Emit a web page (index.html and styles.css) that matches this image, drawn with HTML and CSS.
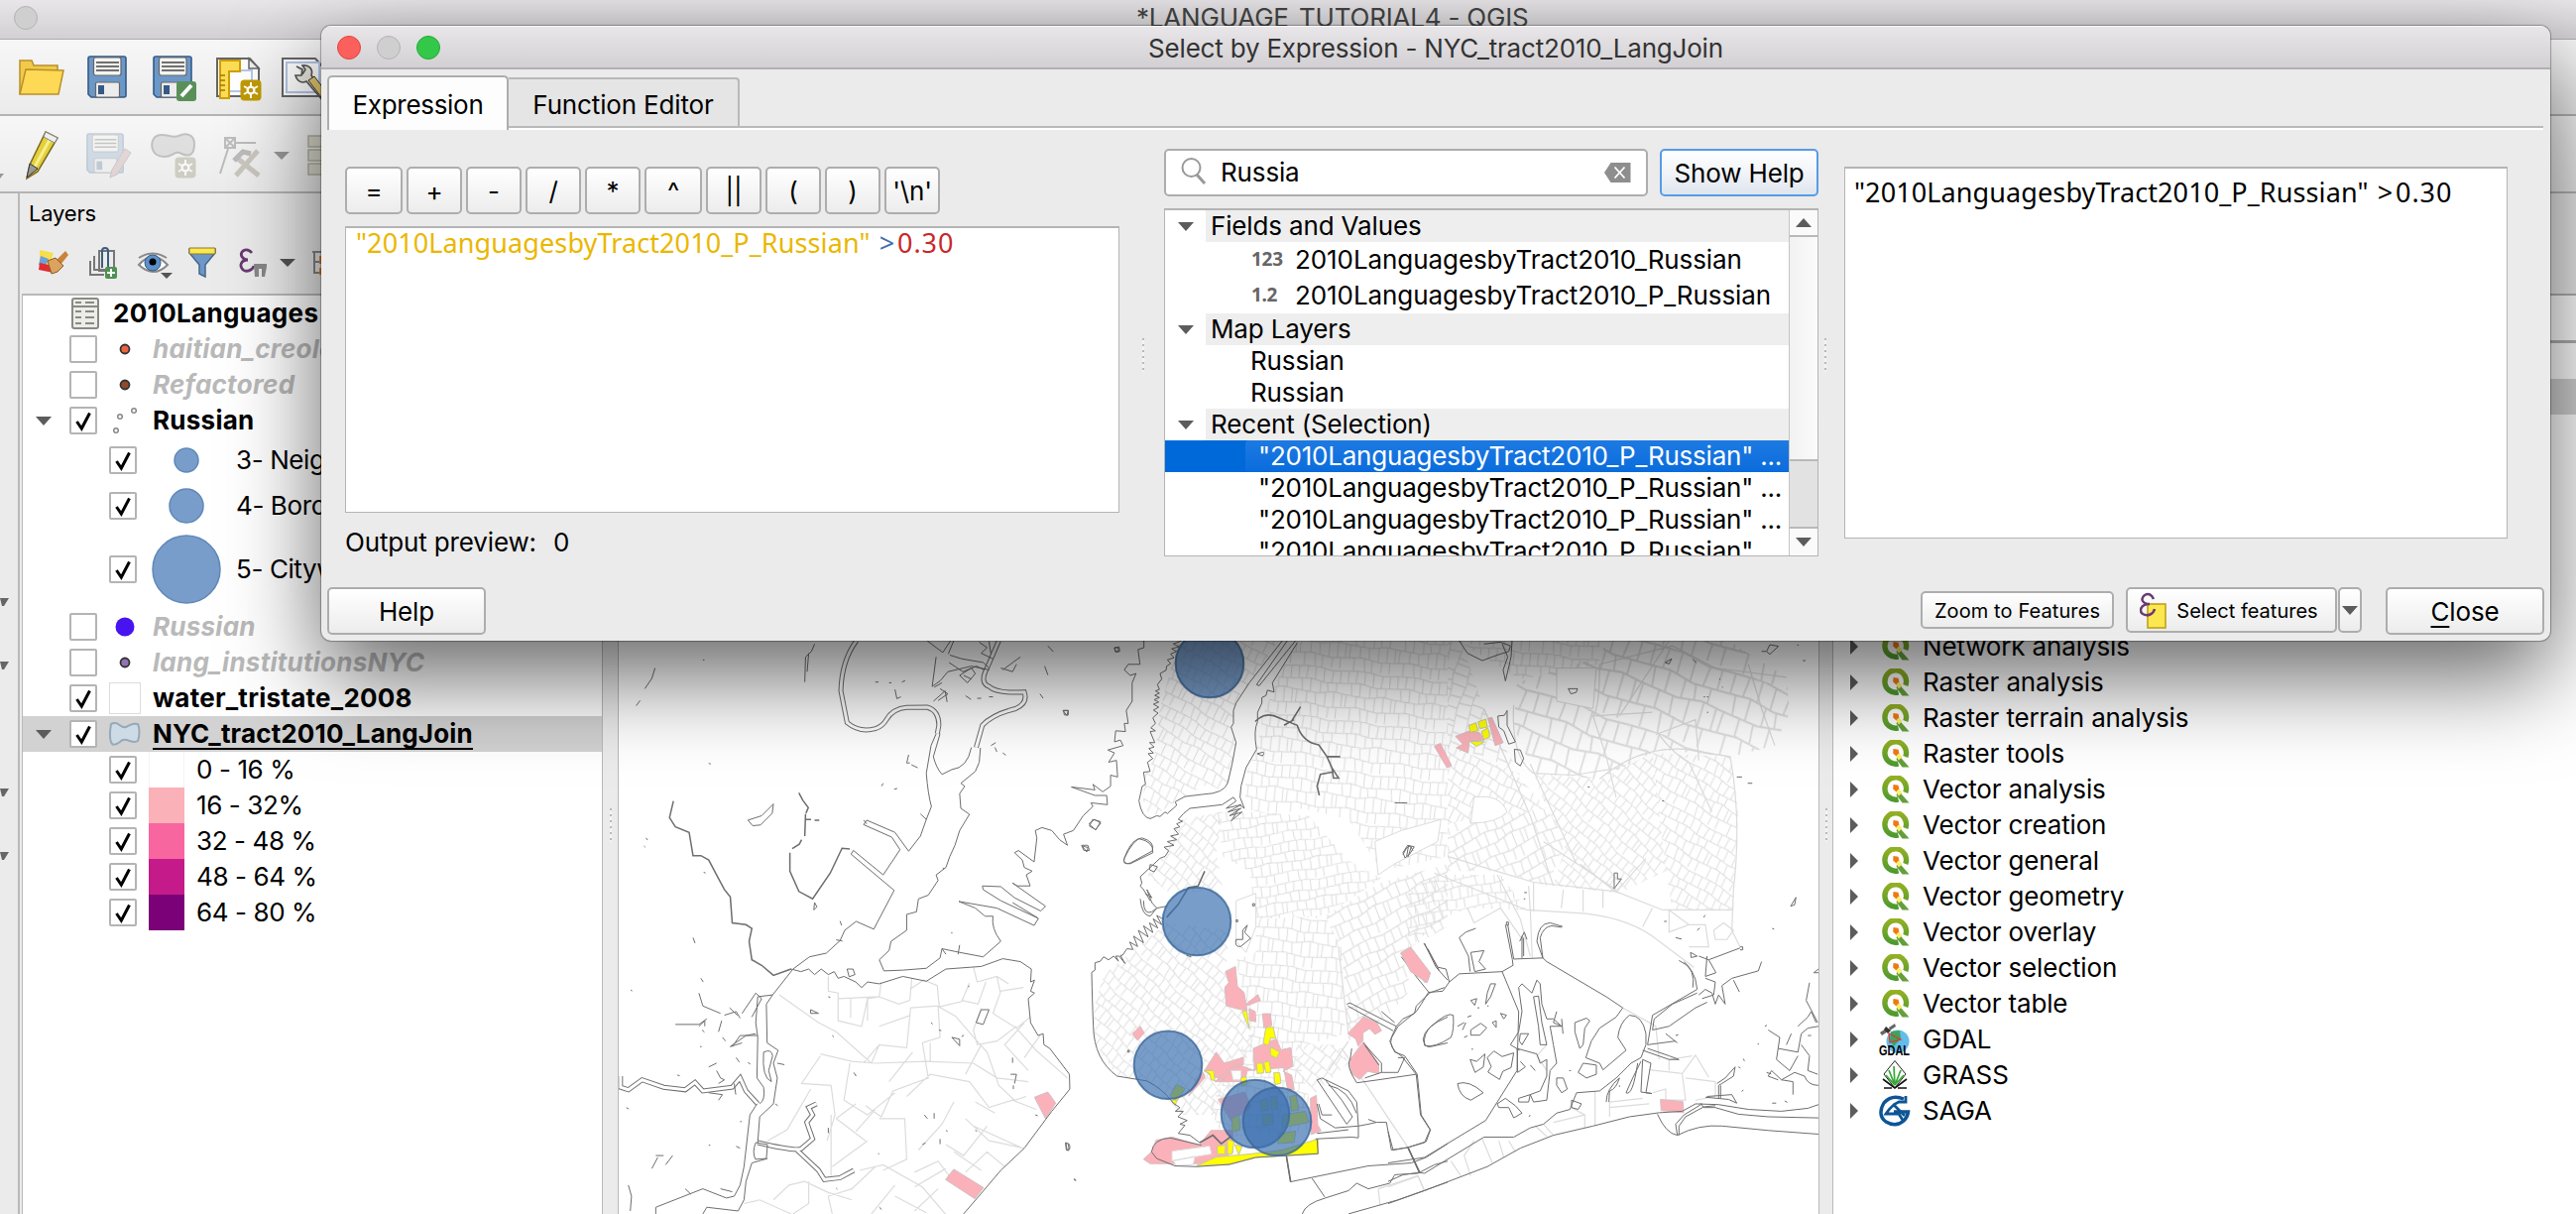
FILE: index.html
```html
<!DOCTYPE html>
<html lang="en">
<head>
<meta charset="utf-8">
<title>QGIS</title>
<link rel="stylesheet" href="styles.css">
</head>
<body>
<svg class="defs" width="0" height="0">
  <defs>
    <symbol id="check" viewBox="0 0 28 28"><rect x="1" y="1" width="26" height="26" rx="1" fill="#fff" stroke="#b4b4b4" stroke-width="2"/><path d="M7.5 15l4.8 7L20.5 6.500" fill="none" stroke="#000" stroke-width="3"/></symbol>
    <symbol id="uncheck" viewBox="0 0 28 28"><rect x="1" y="1" width="26" height="26" rx="1" fill="#fff" stroke="#b4b4b4" stroke-width="2"/></symbol>
    <linearGradient id="qg" x1="0" y1="0" x2="0" y2="1"><stop offset="0" stop-color="#93b023"/><stop offset="1" stop-color="#4f9a2e"/></linearGradient>
    <symbol id="qgis" viewBox="0 0 28 28"><path d="M17 23.800A10.800 11.200 0 1 1 24.300 17" fill="none" stroke="url(#qg)" stroke-width="5.400"/><path d="M17 15l11 12.500h-7L15 19.500z" fill="#64a03a"/><path d="M12 9l5 .8 1 4.200-3 2.600-3.300-3z" fill="#ee7913"/><path d="M14.500 16.500l3-3 3.500 3.500-3.500 3.500z" fill="#fcf06a"/></symbol>
    <symbol id="floppy" viewBox="0 0 40 43"><path d="M3 1h34a2 2 0 0 1 2 2v37a2 2 0 0 1-2 2H4l-3-3V3a2 2 0 0 1 2-2z" fill="#6c98c8" stroke="#355a86" stroke-width="1.600"/><rect x="6.500" y="2" width="27.500" height="18" rx="2" fill="#f4f4f2" stroke="#666" stroke-width="1.200"/><path d="M9 7h23M9 11h23M9 15h23" stroke="#444" stroke-width="1.500"/><rect x="8.500" y="27" width="24" height="15" rx="1.500" fill="#ececec" stroke="#666" stroke-width="1.200"/><rect x="11" y="30" width="6" height="9" fill="#355a86"/></symbol>
    <symbol id="gear" viewBox="0 0 22 22"><rect x=".5" y=".5" width="21" height="21" rx="4" fill="currentColor"/><path d="M11 3v16M4 7l14 8M4 15l14-8" stroke="#fff" stroke-width="2"/><circle cx="11" cy="11" r="4.500" fill="#fff"/><circle cx="11" cy="11" r="2.200" fill="currentColor"/></symbol>
    <pattern id="mesh" width="150" height="136" patternUnits="userSpaceOnUse" patternTransform="rotate(6)"><path class="tract" d="M0 4L60 0 110 8 150 4M0 38L45 34 90 42 150 38M0 68L70 72 115 64 150 68M0 104L40 100 98 108 150 104M8 4v34M34 2l-3 33M58 0v36M84 4v37M112 8l-4 33M134 6v33M18 36l4 33M46 34v36M76 39v33M96 42l4 26M124 39v26M6 68l-2 36M36 70v30M62 71l3 33M92 68v39M118 64v42M142 67v37M20 102v36M50 101l4 36M74 104v36M104 108l-2 34M128 106v34"/></pattern>
    <pattern id="mesh-a" href="#mesh" patternTransform="rotate(28) scale(.95)"/>
    <pattern id="mesh-b" href="#mesh" patternTransform="rotate(40) scale(.9)"/>
    <pattern id="mesh-c" href="#mesh" patternTransform="rotate(-24) scale(1.050)"/>
    <pattern id="mesh-d" href="#mesh" patternTransform="rotate(-72) scale(1.100)"/>
    <pattern id="mesh-e" href="#mesh" patternTransform="rotate(18) scale(1.700)"/>
    <pattern id="mesh-f" href="#mesh" patternTransform="rotate(-8) scale(1,.8)"/>
  </defs>
</svg>

<div class="app">
  <header class="titlebar"><i class="light"></i><span class="main-title">*LANGUAGE_TUTORIAL4 - QGIS</span></header>
  <div class="toolbar">
    <svg width="340" height="75" viewBox="0 40 340 75">
      <path d="M20 95V61h12l2 5h24v7" fill="#f2c94a" stroke="#b8902a" stroke-width="1.500"/><path d="M20 95l6-25 38 1-5 24z" fill="#fdd955" stroke="#b8902a" stroke-width="1.500"/>
      <use href="#floppy" x="88" y="56" width="40" height="43"/>
      <use href="#floppy" x="154" y="56" width="40" height="43"/>
      <rect x="178" y="82" width="20" height="20" rx="3" fill="#5a9058"/><path d="M183 97l10-11" stroke="#fff" stroke-width="4"/>
      <path d="M219 59h33l9 10v28h-42z" fill="#fff" stroke="#666" stroke-width="2"/><path d="M231 71h23v21h-23z" fill="none" stroke="#b5c8ec" stroke-width="2"/><path d="M251 59v10h10z" fill="#eee" stroke="#666" stroke-width="1.500"/><path d="M222 61h20v11h-11v27h-9z" fill="#fddc57" stroke="#cf9f00" stroke-width="2"/><path d="M222 76h5M222 81h5M222 86h5M222 91h5" stroke="#a07a00" stroke-width="1.500"/>
      <use href="#gear" x="242" y="80" width="22" height="22" color="#c09a00"/>
      <path d="M285 59h33l9 10v28h-42z" fill="#fff" stroke="#666" stroke-width="2"/><path d="M289 63h33v30h-33z" fill="none" stroke="#b5c8ec" stroke-width="2"/><path d="M299 67l6 3-1 6-6 0c2 7 7 8 11 6l17 20 5-4-17-22c2-6-2-11-9-10l3 4-3 5" fill="#e8e8e0" stroke="#555" stroke-width="1.600"/><path d="M311 81l13 17 6-4-13-17z" fill="#e2c76c" stroke="#333"/>
    </svg>
  </div>
  <div class="toolbar second">
    <svg width="340" height="76" viewBox="0 117 340 76">
      <path d="M0 175h4l-4 5z" fill="#999"/>
      <path d="M46 133l12 6-20 34-11 7 3-14z" fill="#e4d03c" stroke="#7b6a1f" stroke-width="1.500"/><path d="M50 141L34 170" stroke="#f7ee8d" stroke-width="3"/><path d="M46 133l12 6-3 5-11-6z" fill="#eee" stroke="#888"/><path d="M30 165l8 5-11 9z" fill="#999" stroke="#333"/>
      <g opacity=".25"><use href="#floppy" x="86" y="134" width="40" height="41" color="#888"/><path d="M126 150l6 4-14 22-7 3 2-8z" fill="#b88" stroke="#655"/></g>
      <g opacity=".55"><path d="M158 137c8-4 14 3 22 0 8-4 16-1 16 8 0 10-4 14-13 10-6-4-9 3-17 3-16 0-15-18-8-21z" fill="#cfcfcf" stroke="#999" stroke-width="2"/><use href="#gear" x="176" y="158" width="22" height="22" color="#b3b3a0"/></g>
      <g opacity=".5" fill="none" stroke="#888" stroke-width="2"><path d="M227 139h10v10h-10zM227 139l10 10M237 139l-10 10M238 144h20M230 150l-8 25"/><path d="M238 177l22-25M240 160l21 17" stroke="#a5a08f" stroke-width="5"/><path d="M236 162l9-9 8 2" stroke-width="5"/></g>
      <path d="M276 153h16l-8 8z" fill="#999"/>
      <g fill="#deddd0" stroke="#b5b3a4" stroke-width="1.500"><path d="M311 137h20v11h-20zM311 151h20v11h-20zM311 165h20v11h-20z"/></g>
    </svg>
  </div>
  <main class="workspace">
    <aside class="strip"><svg width="20" height="1029" viewBox="0 195 20 1029"><path d="M0 603h9l-5 8H2zM0 667h9l-5 8H2zM0 795h9l-5 8H2zM0 859h9l-5 8H2z" fill="#666"/></svg></aside>
    <section class="layers">
      <h2 class="dock-title">Layers</h2>
      <div class="dock-tools">
        <svg width="310" height="60" viewBox="20 236 310 60">
          <path d="M40 252l14 3-5 14-9-4z" fill="#f7df4c"/><path d="M41 258l8 3-4 9-6-3z" fill="#6da0dc"/><path d="M40 265l9 2 5 8-15-3z" fill="#e02c33"/><path d="M66 253l3 4-8 10-5-4z" fill="#c9843a"/><path d="M48 263l8-3 8 8-6 6-6 2z" fill="#dca35f" stroke="#8c5a26"/>
          <g fill="none" stroke="#777" stroke-width="2"><path d="M91 263v14h14M95 258v14h14M100 253h15v20h-15z"/></g><path d="M103 270v-17a3 3 0 0 1 6 0v16" fill="none" stroke="#3c5d80" stroke-width="2"/><rect x="106" y="269" width="12" height="12" rx="2" fill="#4f9153"/><path d="M112 271v8M108 275h8" stroke="#fff" stroke-width="2"/>
          <path d="M140 267q14-16 29 0-14 14-29 0z" fill="#fff" stroke="#888" stroke-width="2"/><path d="M140 260q14-9 28 0" fill="none" stroke="#888" stroke-width="2"/><circle cx="154" cy="265" r="8" fill="#5d90c9" stroke="#355a86"/><circle cx="154" cy="264" r="3.500" fill="#000"/><path d="M162 275h12l-6 6z" fill="#555"/>
          <path d="M191 251h26v4l-10 12v12l-6-3v-9l-10-12z" fill="#6c98c8" stroke="#46658c" stroke-width="1.500"/><path d="M191 250h26v6h-26z" fill="#fbe74f" stroke="#8a7a2c"/>
          <path d="M254 255q-4-5-9-2c-4 4 0 9 5 9-7 0-9 6-5 10 4 3 10 0 11-4" fill="none" stroke="#6a3a72" stroke-width="2.800"/><path d="M256 266h13v3l-2 10h-3v-8h-3v8h-4z" fill="#888"/>
          <path d="M282 261h16l-8 8z" fill="#555"/><path d="M315 254h9M317 254v21h7M317 264h7" fill="none" stroke="#888" stroke-width="2"/><path d="M322 258h6v8h-6zM322 270h6v7h-6z" fill="#e88c2c"/>
        </svg>
      </div>
      <div class="tree">
        <div class="row"><span class="gap"></span><span class="ic0"><svg width="28" height="32"><rect x="1" y="1" width="26" height="30" rx="2" fill="#ecece8" stroke="#8a8a84" stroke-width="2"/><path d="M1 9h26" stroke="#8a8a84" stroke-width="2"/><path d="M4 5h6M14 5h9M4 14h6M14 14h9M4 20h6M14 20h9M4 26h6M14 26h9" stroke="#8a8a84" stroke-width="2"/></svg></span><b>2010Languages</b></div>
        <div class="row off"><span class="gap"></span><svg class="cb"><use href="#uncheck"/></svg><span class="ic"><svg width="12" height="12"><circle cx="6" cy="6" r="4.500" fill="#e8663f" stroke="#333" stroke-width="1.800"/></svg></span><b>haitian_creole</b></div>
        <div class="row off"><span class="gap"></span><svg class="cb"><use href="#uncheck"/></svg><span class="ic"><svg width="12" height="12"><circle cx="6" cy="6" r="4.500" fill="#8f4a2b" stroke="#333" stroke-width="1.800"/></svg></span><b>Refactored</b></div>
        <div class="row"><span class="gap"><i class="down"></i></span><svg class="cb"><use href="#check"/></svg><span class="ic"><svg width="32" height="32" fill="none" stroke="#888" stroke-width="1.500"><circle cx="7" cy="26" r="2.300"/><circle cx="11" cy="12" r="2.300"/><circle cx="25" cy="6" r="2.300"/></svg></span><b>Russian</b></div>
        <div class="row sub h44"><svg class="cb"><use href="#check"/></svg><span class="sym"><svg width="26" height="26"><circle cx="13" cy="13" r="12" fill="#799dca" stroke="#5f88b8" stroke-width="1.500"/></svg></span>3- Neighborhood</div>
        <div class="row sub h48"><svg class="cb"><use href="#check"/></svg><span class="sym"><svg width="36" height="36"><circle cx="18" cy="18" r="17" fill="#799dca" stroke="#5f88b8" stroke-width="1.500"/></svg></span>4- Borough</div>
        <div class="row sub h80"><svg class="cb"><use href="#check"/></svg><span class="sym"><svg width="70" height="70"><circle cx="35" cy="35" r="34" fill="#799dca" stroke="#5f88b8" stroke-width="1.500"/></svg></span>5- Citywide</div>
        <div class="row off"><span class="gap"></span><svg class="cb"><use href="#uncheck"/></svg><span class="ic"><svg width="20" height="20"><circle cx="10" cy="10" r="9.500" fill="#4713f0"/></svg></span><b>Russian</b></div>
        <div class="row off"><span class="gap"></span><svg class="cb"><use href="#uncheck"/></svg><span class="ic"><svg width="12" height="12"><circle cx="6" cy="6" r="4.500" fill="#9273b5" stroke="#333" stroke-width="1.800"/></svg></span><b>lang_institutionsNYC</b></div>
        <div class="row"><span class="gap"></span><svg class="cb"><use href="#check"/></svg><span class="ic"><i class="blank"></i></span><b>water_tristate_2008</b></div>
        <div class="row current"><span class="gap"><i class="down"></i></span><svg class="cb"><use href="#check"/></svg><span class="ic"><svg width="32" height="24"><path d="M2 2c8-4 9 5 15 3 6-3 8-4 12-3 2 4 2 12 0 17-6 4-12-5-18 1-4 3-8 4-9 0-2-5-1-12 0-18z" fill="#cddbe6" stroke="#95a9b8" stroke-width="2"/></svg></span><b class="active">NYC_tract2010_LangJoin</b></div>
        <div class="row sub"><svg class="cb"><use href="#check"/></svg><i class="swatch s0"></i>0 - 16 %</div>
        <div class="row sub"><svg class="cb"><use href="#check"/></svg><i class="swatch s1"></i>16 - 32%</div>
        <div class="row sub"><svg class="cb"><use href="#check"/></svg><i class="swatch s2"></i>32 - 48 %</div>
        <div class="row sub"><svg class="cb"><use href="#check"/></svg><i class="swatch s3"></i>48 - 64 %</div>
        <div class="row sub"><svg class="cb"><use href="#check"/></svg><i class="swatch s4"></i>64 - 80 %</div>
      </div>
    </section>
    <div class="splitter"><i class="dots"></i></div>
    <svg class="map" width="1210" height="1029" viewBox="624 195 1210 1029">
      <!-- New Jersey and Staten Island -->
      <g transform="translate(610 640) scale(.3954 .3724)">
        <path class="tr" d="M445 975L545 1050 590 1075 680 1160 700 1110 770 1118 780 1010M570 925v40l25 5v75l60 15 15-75 30-5 5-40M595 985l105-5M627 985v52M670 980v65M700 980l50 20 28-10 5-60M778 960l35-25 35 15 5 58 42 25 50 62 30 35 30 90 40 40 30-10M780 1010l70-5 5 85-45 15 15 95-90 35-30 70-40-30M850 1008l60-15 20-50M940 900l10 40 50-15 30 20M912 990l40 10 20-60M1000 925l8 40 60-10M1010 965l-20 60 60 40 35-30M1050 1060l-50 40-50 10-10-40 20-60M1050 1065l50 60 80 75M1070 1050l-50 60 60 70M1110 1085l-40 60M550 1135l80 20 60 5 130-5 120 5 60 40 80 10M550 1140L502 1215l75 5 10 80-20 70M625 1160l-15 100 60 40 70-60M660 1160l40-50M590 1310l75 60M640 1270l-50 40M690 1285l-50 60M670 1370l-90 70M700 1310l65 0 5 110-60 30M770 1250l60-60 100 20 50 70 60-20 60 25M800 1395l60-70 30-60M870 1380l45 30 60-80M920 1310l60 60 90 20M945 1265l50 30M940 1330l125 60M890 1400l70 50M975 1400l45 40M975 1400l-55 55M650 1450l60-15 100 60 60 75M690 1440l-60 60-60 20 10 48M430 1530l40-40 40-10 60 30 60 20M520 1480v60l-40 28M790 1455l60-30 50 70M740 1490l-60 78M790 1495l80-50M577 1300v165M415 1370l50-30 60-110M725 1210l60-80M780 1030l-80 30M830 1155v-50M960 1110l-40 80M355 1540l40-10 80 38M740 1520l80 45M850 1500l-60 60"/>
        <path class="pink" d="M1096 1252l34-14 20 30-26 42zM890 1447l76 50-22 30-75-52z"/>
        <path class="riv" d="M642 16Q604 70 602 152L618 238Q650 266 690 254 708 248 718 230 735 200 770 197L822 196Q852 205 852 245L848 268M1005 16L975 90Q955 130 980 140 1000 160 1070 155 1080 185 1048 200 990 215 963 245L947 305M390 1375Q480 1398 500 1392L530 1365 515 1320 530 1300 520 1280 540 1270M490 1395L545 1450 560 1475 600 1470 635 1450M40 1195V1225L60 1232 95 1205 150 1225 205 1232 230 1212 250 1235 325 1225 345 1200 360 1235 390 1270"/>
        <path class="riv in" d="M642 16Q604 70 602 152L618 238Q650 266 690 254 708 248 718 230 735 200 770 197L822 196Q852 205 852 245L848 268M1005 16L975 90Q955 130 980 140 1000 160 1070 155 1080 185 1048 200 990 215 963 245L947 305M390 1375Q480 1398 500 1392L530 1365 515 1320 530 1300 520 1280 540 1270M490 1395L545 1450 560 1475 600 1470 635 1450M40 1195V1225L60 1232 95 1205 150 1225 205 1232 230 1212 250 1235 325 1225 345 1200 360 1235 390 1270"/>
        <path class="co" d="M845 268L832 300 820 375Q824 430 833 465L820 500 805 485M820 500L805 545 775 586 740 535 668 502 660 514 732 548 753 582 710 650 634 584 628 594 738 692 686 797 641 776 612 800 600 828 565 862 522 872 480 905 428 975 390 980M855 268L838 330Q845 360 860 378L885 365Q925 360 935 305M958 306L955 345 945 370 908 402 918 410 905 430 908 470 930 486 905 530 893 570 880 600 870 630 845 650 850 665 825 705 800 715 795 750 770 757 770 800 730 830 725 855 700 880 712 910 760 908 820 903 855 875 860 850 905 860 965 872 1010 830Q985 795 990 762L970 762 945 740 903 722 1000 740 1095 787 1106 768 1010 720 965 690 963 680 1010 682 1045 712 1112 748 1124 735 1040 672 1052 680 1085 680 1075 650 1090 640 1070 630 1065 610 1045 590 1055 584 1095 615 1102 550 1098 530 1115 522 1140 530 1160 555 1180 570 1170 540 1195 530 1220 490 1245 465 1240 455 1282 460 1280 435 1250 435 1190 412 1250 420 1245 405 1270 425 1290 410 1290 380 1308 385 1305 340 1285 345 1300 320 1283 312 1322 300 1315 285 1300 290 1303 260 1328 262 1325 240 1335 240 1330 205 1345 180 1345 130 1355 105 1340 110 1325 95 1335 80 1365 80 1360 40 1375 35V16M475 905L500 912 520 905 535 920 552 905 570 920 585 912 595 930 610 925 640 940 655 955 670 940 700 945 760 925 820 938 870 905 960 898 1015 877 1060 885 1088 905 1086 940 1096 935 1086 965 1096 970 1080 985 1086 1050 1105 1085 1118 1080 1120 1110 1135 1120 1185 1190 1186 1230 1140 1290 1070 1390 1010 1450 950 1525 915 1568M390 980L385 1050 390 1090 388 1200 405 1225Q410 1260 395 1270M428 975L412 1000 414 1105 442 1125 430 1160 440 1200 430 1270 395 1305 390 1375M388 1270L370 1300 355 1440 345 1490 330 1520 310 1525 250 1500 130 1550V1568M385 1375Q375 1400 384 1420L412 1418 415 1380ZM415 1418L375 1430 360 1480 355 1530 340 1560 260 1550 250 1568M405 1130Q425 1120 428 1140L418 1180 425 1210 Q400 1200 405 1130M1325 605Q1340 560 1362 552 1400 560 1398 590L1340 620Q1320 620 1325 605M960 1015l20 0-15 40-18-5z"/>
        <path class="co wide" d="M175 450L165 495 180 520 215 535 225 598 245 598 265 610 285 650 305 690 320 710 325 780 360 785 375 795 368 830 375 880 400 895 430 922 475 905M512 485L510 545M472 590L472 640 495 695 530 715 575 645 605 578 625 580M495 428l10 20 14 20-6 15M512 500h14M535 502h12M502 555l-6 12-18 12"/>
        <path class="co" d="M128 90l-8 28-18 28M90 178l-10 14M535 25l-8 20-15 15-2 68M520 50l-4 50M822 16l40 32 20-32M890 16l-14 36M845 60l-10 80 20-15 20-25 60-15 45 10M880 55l30 10 55 10 15 15M878 75l35 25 35-15 20 10M905 110l20 20 20-25-10-15zM915 110l20 10M838 180l30-28 5 30M850 178l25-18-20-14M860 130l-20 12M955 20l20 15-15 15 30 15M980 18l5 35M1010 90l30 10 10-20M1015 95l45-35M1130 30l14 16M1122 85l8 24M1110 160l8 12M920 165l14 10M950 172h10M980 168h10M690 128h8M725 130h6M758 128l8-4M740 148l5 25 10-5M985 300l12-8M995 305l5 12M1015 320l8 6M775 325l-5 22 8 0M782 352l16 8M710 402l-4 8M738 418l8-2M105 550l4 6M100 572l3 3M365 502l35-12 30-32-3 25-30 32-20 2zM660 502l8 10M225 820l5 15M535 725l-2 20 8-8zM600 775l4 12M590 826l16 3M885 805v4M905 840l-4 25M860 850l10 15M1040 725l65 42M1300 35h10v10h-8zM1170 205l12 0 0 12-10 0zM1235 512l14-12 16 10-14 18zM1216 570l16 0 4 14-14 0zM525 1015l20 10-20 0zM618 905l15 0 5 15-15 6zM240 970l10 35 45 20M180 1055l60 0 20-15M240 1060l15-15 0 15M290 1075l8-30M305 1030l30-10 10 18M318 1010l20 20M350 1025l35-55 15 15-25 50M385 1080l-25 5-40 30 30-10M300 1090l8 10M390 1085l-45 0-20 30M335 1145l8 12M365 1158l6 4M265 1170l20-10M285 1180l10 20 10 5-15 10M265 1240l35 5-10 15M330 1215l4 30M55 1280l6 4M245 930l6 10M248 1070l6 6M345 1390l-10-5M205 1500l15 15M295 1500l30 8M120 1445l15-30M130 1410h20M155 1435l18-25M60 1490l8 30-3 40M580 1085l4 4M635 1185l6 10M570 1335v14M815 1300l8 10M840 1295v15M810 1380l8-4M855 1365v14M870 1342l4 2M945 1342l4 2M1175 1375q10 0 8 20l-6 0zM1098 1300l6 2M590 1498l3 3M700 1550l6 6M697 1405h3M885 1090l20 5 0 18zM910 1088l6-4M832 1050l4 4M852 1070l6 2M928 950v4M570 980l5 2M1040 1145v14M1035 1190l15 0-5 25M1042 1220v10M440 1160l18 4M435 1270l6 5M345 1318h4M265 1382h4M250 68h4M265 348l5 2M252 643l5 2M66 962l4 2M185 1192l6 2M243 1115h4M862 632h4M1196 1475l4 3"/>
      </g>
      <!-- Manhattan and Brooklyn -->
      <g transform="translate(1060 640) scale(.3333 .3724)">
        <path fill="url(#mesh-a)" d="M385 16L330 200 312 330 285 380 278 450 300 496 400 440 470 405 530 425 560 300 545 250 560 180 690 16Z"/>
        <path fill="url(#mesh)" d="M700 90L640 220 622 310 590 380 585 470 680 490 760 470 900 500 1000 640 1200 600V16H745Z"/>
        <path fill="url(#mesh-b)" d="M390 500L330 610 290 650 360 700 520 690 500 590 520 480Z"/>
        <path fill="url(#mesh-f)" d="M500 480L620 480 780 490 900 610 1000 660 830 760 620 770 600 640 520 600Z"/>
        <path fill="url(#mesh-b)" d="M350 780L160 920 130 1010 130 1100 200 1195 290 1208 400 1300 500 1300 620 1100 530 900 540 800Z"/>
        <path fill="url(#mesh)" d="M620 770L830 760 880 850 890 1080 740 1120 780 1250 800 1340 520 1360 480 1280 600 1080 560 880 620 860Z"/>
        <path fill="url(#mesh-c)" d="M830 760L1000 670 1200 620V790L1060 860 1090 960 1020 1030 900 1100 880 870Z"/>
        <path fill="url(#mesh-b)" d="M740 1110L870 1110 900 1160 800 1240 740 1180Z"/>
        <path class="tr" d="M880 1120L1080 1388M990 1500L1110 1465 1130 1505M990 1500l6 45M900 1100l-60 80M870 850l30 230"/>
        <path class="park" d="M560 720l60-20 0 90-30 70-30-30zM980 560l80-30 120-30-10 60-130 60-50 30z"/>
        <path class="pink" d="M528 912l30-14 6 54 20 16 10 50-34-6-30-8-4-50 12-12zM590 1000l36-26 8 16-40 14zM600 1012l18 8 2 28-20-4zM640 1026l24 0 4 32-24 6zM1058 862l30-16 58 70-14 26-40-40zM246 1080l24-20 12 18-20 20zM898 1080l48-46 40 16 14 22-20 10-16-16-20 12 0 20-14 16-8-20zM930 1120l16-18 46 60 0 26-34-6-24 22-24-16-8-34zM464 1180l36-50 24 30 58-16v20l-30 6-30 34-36-8zM612 1120l70-26 14 30 30-6 6 50-30 14 26 10 8 40-20 0-12-60-110 8-8 30-90 0 60-50 60 20zM440 1205l20-20 6 14-50 50zM785 1255l18-8 4 80 10 16-30 10zM506 1258l80-20 20 40-60 40zM304 1400l14-32 50-8 80 22 36-40 66 0 0 60-70 30-180 0-20-12z"/>
        <path class="hole" d="M366 1398l114-14 6 22-120 18zM370 1424l66-12-6 22-52 4zM545 1180h30l0 25-24 0z"/>
        <path class="yel" d="M578 1020l14-2 8 48zM650 1064l22-2 8 30-16 0-6 20-16-6zM664 1116l28 14-10 16-18-8zM622 1160l18 0 4 26-20 2zM644 1158l16-4 6 30-16 2zM462 1180l30 0 4 28-12-4-4-16zM674 1186l18 0 4 28-18 4zM574 1200l16-4 4 22-16 4zM364 1262l18-6-6 18zM440 1438L500 1414 600 1406 700 1395 808 1365 808 1405 620 1415 540 1434zM502 1384l26-2-2 24-22 0zM534 1366l20 6-6 34-14 0zM556 1380l22 6-10 22zM360 1248l20-30 26 10-26 36zM548 1310l20-10 4 40-24 6zM634 1260l20-4 4 30-24 4zM664 1250l20 0 2 34-20 0zM722 1250l20-4 8 40-22 4zM640 1300l30-4 0 30-30 4zM700 1300l70-10 10 30-80 14zM690 1350l50-6-4 30-50 4z"/>
        <path class="co" d="M395 16L370 25 388 32 365 38 380 45 362 52 372 62 352 68 362 78 350 85 348 96 330 105 335 120 322 135 328 148 316 152 328 158 314 164 328 170 312 176 326 182 310 188 326 196 310 204 324 212 308 225 316 240 302 252 316 260 300 262 314 292 298 292 312 304 296 308 310 320 294 322 308 335 292 345 300 370 280 372 286 405 276 410 266 450Q275 495 300 498L320 490 330 492 345 480 352 484 370 470 380 462 376 452 405 438 460 432Q525 430 535 400L548 350 560 292 545 250 552 240V205L560 185 600 130 700 16M715 16L622 135 630 138 700 60 740 16M745 22L670 130 675 155 655 150 650 165 638 170V185L625 210V235Q612 260 622 310L590 360 575 410 572 440 585 470 570 460M640 318q8 0 0 10l-16-6zM518 460L552 440 560 450 530 470 575 460 535 480 575 470 540 490 578 480 550 500M545 505l20-30M518 460L420 470 400 485 385 500 398 505 380 512 390 520 372 525 386 540 362 545 380 555 352 560 372 570 342 575 356 585 345 600 330 605 270 655 275 672 270 680 280 690 300 720M270 715Q275 760 300 762L320 740 305 725 290 690 305 712 285 700M280 720q0 40 25 30l15-10 30-5M340 770l-20-10 15 25-26-16 14 25-25-14 10 26-28-18 14 30-30-18 16 34-30-18 12 28-24-12 10 20-18-2-14 18-6 0 14 22-18-20-10 0 8 14-14-14-16 10-15-8-10 12-16 4 0 20-10 6Q125 1000 128 1060 130 1150 200 1195L290 1208Q340 1230 370 1268L390 1280 376 1290 400 1290 384 1305 412 1315 390 1325 405 1328 385 1350 420 1355 450 1375M300 622l22 6-10 14-14-6zM222 605Q250 552 275 550 315 560 307 585L240 618Q215 625 222 605ZM560 825l20 0 0-25 14-14-8 20 18 16-30 22q-20 2-14-19M610 728h6v6h-6zM560 772h5v5h-5zM410 868l14 4M232 1125h5v5h-5zM304 1400Q310 1365 360 1362L455 1382M304 1400L320 1418 375 1438 440 1440 540 1434 620 1415 808 1405 805 1365M1000 1020L1040 1050M895 1000L905 997 1045 1060 1030 1090M898 1005L1035 1072M1060 872L1100 920 1145 970 1190 955M1130 835L1165 900 1200 935M1140 850L1175 910M1145 970L1105 1005 1100 1025 1065 1040 1045 1060M910 1120L905 1150Q895 1160 910 1190L925 1213 990 1205 1105 1190M945 1105L1000 1160V1185L950 1200M950 1112L992 1165M1030 1090Q1020 1120 1060 1140L1105 1190 1118 1300 1147 1340 1130 1375 1080 1388 1030 1395 1015 1320 985 1320 960 1325 930 1330 860 1335 815 1310 805 1270M1050 1145l20 0-20 40-50 0M960 1312l24 8M805 1205L820 1200 900 1235 925 1265 930 1330M805 1205L895 1325 912 1305 880 1260 830 1205M840 1220q60 10 84 75M810 1270l10 30 30 0M800 1365L910 1360 930 1362V1330M805 1350L900 1340M1065 590l14-20 20 4-14 20-14 10zM1082 570l-6 30M1090 574l-10 28M1062 455h16M1200 1035Q1130 1060 1126 1095 1130 1120 1150 1115L1200 1105M712 1410L725 1481 960 1438 1090 1430 1135 1415 1200 1378M790 1472L828 1522M1080 1388L1115 1455M760 1568Q770 1540 830 1525L900 1505 925 1485 960 1500 1025 1485 1040 1462 1110 1458 1160 1435 1200 1425M900 1568L1050 1530 1200 1482M192 35l14-2 2 12-12 2zM36 205h16l-4 14zM126 500l24 6-14 22-20-10zM94 572l18 4-4 12zM45 1378q10-5 12 8 0 12-8 10zM70 1472l6 6"/>
        <path class="co thick" d="M618 235Q650 205 690 225L725 238 745 245Q760 290 810 298L835 330 850 360 855 390M725 238L755 195M705 245l30-15M835 330L875 330M850 360L870 388 855 388M850 372L815 378 805 410 812 435M465 640L445 680 415 685 385 730 350 765M450 1375L490 1355 515 1378 545 1358M1080 1388L1115 1455M712 1410L725 1481"/>
        <g class="bubble"><circle r="1" transform="matrix(103 0 0 92 480 78)"/><circle r="1" transform="matrix(103 0 0 92 441 776)"/><circle r="1" transform="matrix(103 0 0 92 354 1165)"/><circle r="1" transform="matrix(103 0 0 92 618 1297)"/><circle r="1" transform="matrix(103 0 0 92 684 1318)"/></g>
      </g>
      <!-- Queens and Jamaica Bay -->
      <g transform="translate(1400 640) scale(.3333 .3724)">
        <path fill="url(#mesh-d)" d="M180 16H220L290 200 400 380 300 330 180 310Z"/>
        <path fill="url(#mesh)" d="M210 16L400 120 640 80 640 16Z"/>
        <path fill="url(#mesh-e)" d="M390 130L640 60 660 16H1030L1205 115 1215 210 1170 300 1035 330 820 310 640 390 440 375 380 250Z"/>
        <path fill="url(#mesh-a)" d="M180 300L380 370 480 470 340 490 180 510Z"/>
        <path fill="url(#mesh-c)" d="M180 510L480 470 540 560 480 680 340 640 180 640Z"/>
        <path fill="url(#mesh-b)" d="M440 375L640 390 800 320 840 640 700 700 500 680 540 560 480 470Z"/>
        <path fill="url(#mesh-a)" d="M800 320L1035 330 1060 480 1045 690V745H860L840 640Z"/>
        <path fill="url(#mesh-f)" d="M140 650L340 650 420 745 250 740 180 760 60 850V700Z"/>
        <path class="tr" d="M640 80Q640 200 620 220L660 330 690 440M1035 330Q1070 500 1045 690L1040 800 1065 845M140 645L420 745 600 755Q740 770 820 830L925 900M180 600L440 670 690 695 830 745H1045M430 350L570 620M290 200L430 490 500 680M640 390Q760 300 900 310L1035 330M440 375L560 380 700 360M380 190Q370 330 440 375M700 220L850 16M620 220L800 210M640 80L860 30 990 90 1205 115M810 270L930 230 940 340M1090 80L1130 200 1170 300M820 270Q860 320 910 345L980 480M800 740L770 790M850 745l60 40-60 20zM910 785l50 0 10 60-60 0M985 800l30-20 30 20-20 25-35 0zM425 680L430 745M440 670l0 80M530 690l-6 50M590 690v60M650 690v50M580 620l110 75 90-90M470 560l220 130M430 745l6 130M330 650l70 120 30 100M240 740l20 40 80-40 70 90M790 1178l100 10 40-50 40 60M850 1180v-30l70-10M890 1190l10 70-60 0 0-30-40 10M900 1200l90 10 0 40-60 10M670 1265l100-10M670 1280l120-10M670 1265v40M626 1235v95M500 1320l95-20v35M555 1280l40 20M445 1330l35 28M470 1325l30 30M365 1370l20 30M335 1370l15 45M285 1365l30 65M260 1370l-30 40 20 55M190 1425l30 40M0 1495l90-30 20 40M710 1010l100 50 10 90M480 1110l-30 30 30 40"/>
        <path class="park" d="M260 440q80-10 100 40-30 30-110 30zM510 90l120 0-10 110-110-20z"/>
        <path class="pink" d="M140 302l18-8 34 60-14 6zM204 275l40-14 34 5 12 20-44 0-4 34-36-14 20-10zM302 226l12-2 34 68-24 8zM38 862l30-16 60 70-10 26-50-30zM824 1258l68 6 2 30-68-6z"/>
        <path class="yel" d="M244 246l22-8 6 22-24 4zM272 236l24-8 4 22-22 4zM282 262l20-10 6 24-18 8zM246 288l46 2-24 12z"/>
        <path class="co" d="M215 16L240 50 285 70 330 55 365 45 370 30 340 20 290 25M375 16L372 60 355 125 348 95 362 60 345 25M545 146l28 0-4 10-16 4zM332 220L352 218 360 205V245L385 290 365 296 350 260 335 250ZM382 310L400 312 410 335 400 355 385 345ZM838 75l20-10-8 14zM922 66l10 10M1145 45l10-18 26 4-26 22zM1130 45h14M1002 120h3M1010 142h3M955 168h4M965 168h4M965 210h4M1055 385h16M1088 402h14M604 412h6M829 450h6M684 645l10 0 0 16 12 0-22 26zM412 698h8M410 715h5M1218 735l16-24-4 20zM1162 795l6 2M835 776h8M870 820l18 4M955 765l4-6M935 800l8-6M45 595q20-40 30-10M20 455h30M108 835L150 900 175 905 185 940 215 918 345 912 378 895 376 880 355 785M358 778h6v8h-6zM362 785L380 878 468 875 450 830Q455 780 490 780L528 790M468 875L460 820Q470 790 495 788L525 792M405 875V815M410 870V820M398 830l14-25 8 20M248 912L243 870 215 820 235 805 265 795M262 912L250 860 290 855 275 885 295 905 262 912M345 912L395 1020M185 940L165 965 122 968M468 875L480 885 660 980 710 1010 690 1035 640 1065 615 1100 598 1145 640 1160 650 1178 720 1125 695 1090 Q700 1050 730 1030 770 1030 780 1080V1110L765 1145 735 1160 690 1200 640 1235 570 1240 550 1285 510 1295 470 1325 430 1335 380 1360 290 1360 110 1458 95 1456 45 1462 0 1480M85 1020L100 1000 122 968M85 1020L30 1060 5 1100 20 1130 50 1140 88 1190 100 1300 128 1340 115 1372 60 1388 15 1395 0 1345M130 1060Q105 1080 110 1112 140 1120 190 1090 200 1070 197 1030 180 1020 130 1060M395 955L405 945 435 970 450 935 460 945 465 1000 480 1040 500 1040 525 1060 490 1060 500 1110 510 1160 490 1180 480 1260 440 1265 430 1245 460 1235 480 1195 480 1150 460 1160 450 1135 390 1120 392 1185 415 1170 400 1155M440 980L455 978 465 1050 480 1110 460 1110 455 1060ZM395 955L405 1020 395 1075 370 1110 398 1125M565 1050L600 1038 610 1045 595 1065 590 1110 580 1120 565 1075ZM210 1215Q245 1205 288 1240L250 1260Q215 1250 210 1215M575 1185L590 1160 630 1165 630 1190 600 1200ZM510 1200L530 1200 542 1230 525 1240 510 1220ZM248 1150l20 5 25-20-5 35-25 15zM300 1145l20-18 25 15 35-10-8 40-25 10-10 22-35-20 10-15zM250 1070l30-18 18 12-20 20-28 0zM300 970l10-25 15 0-15 35-15 20zM250 990l18-5-6 18zM315 1050l12-5 0 18zM340 1025l18 5-8 10zM210 1060l20-10M225 1070l10-20M230 1090l10-4M240 1035l12-4M270 1010h6M300 1005h4M252 1122h5M400 1080l25 0-20 30-8-10zM430 1165l15 15M330 1270L355 1255 385 1275 405 1295 380 1308 365 1280 335 1280ZM395 1255L430 1245 425 1265 395 1265ZM555 1260l30 10-10 15-20-5zM548 1180h5M430 1300l-4 5M525 1040l4 40M510 1020l-10 30 25 10M660 1265Q660 1230 700 1200 690 1230 670 1235L668 1265M700 1220v4M720 1240L740 1200 765 1155M720 1240Q740 1250 755 1160M770 1150L795 1160 780 1240 798 1242 765 1238ZM880 882Q930 900 935 960L800 1030 785 1110 870 1100M895 885Q930 910 922 955M935 970L860 1000 805 1040 800 1070 850 1060 930 1010 965 995M785 1120L850 1140 880 1150 850 1150 770 1125M840 1080l35 25M870 1085l8-2M940 975L960 960 980 970 990 1000 1000 975 1020 1000 1010 950 1040 930 1120 910 1130 885M965 870L960 925 992 915 970 880M1065 848L970 880 940 870M915 860l20 10-18 4zM1065 845h8v8h-8M960 930L990 940 985 975 950 985M1045 935l18 32M1302 905l-14 10 14 0M1275 942L1265 990 1300 1050M1302 1060L1270 1065 1250 1080 1240 1130 1180 1120 1185 1090 1150 1070M1240 1060L1270 1035 1280 1020 1295 1050M1250 1110L1275 1140 1270 1180 1300 1190M1302 1220Q1270 1220 1260 1195L1230 1185 1190 1205 1160 1180 1150 1195 1180 1205M1190 1205L1225 1210 1225 1245M1180 1120L1175 1150 1215 1180 1240 1140M1140 1060l6-3M1118 1108h4M1270 1085h10M1205 1110L1220 1080M1145 1185l14 4M1162 1268h12M1200 1262l8 4M1070 1236l5-3M995 1215L1020 1200 1050 1170 1045 1195 1010 1215 1000 1220V1255M1006 1220V1255M960 1252L1030 1258 1055 1268 1040 1245 965 1250M1075 1148l3 6M1060 1170l6 3M0 1430L110 1415 295 1315 390 1180 395 1020M60 1388L95 1458M0 1540L110 1505 300 1440 400 1390 500 1355 620 1330 730 1305 820 1294 890 1290 930 1270 1000 1272 1090 1285 1190 1290 1270 1282 1302 1272M815 1298Q840 1350 875 1355L870 1325 895 1300 950 1270M880 1355V1330L900 1305 955 1278 990 1275M875 1355Q940 1325 1010 1330L1150 1342 1302 1352M955 1280L990 1280 1060 1298 1150 1305 1302 1308M945 1268l10 12M1238 28h4M1255 70h8"/>
      </g>
    </svg>
    <div class="splitter right"><i class="dots"></i></div>
    <section class="toolbox">
      <div class="toolbox-head"></div>
      <div class="toolbox-search"></div>
      <div class="toolbox-tree">
        <div class="trow"></div><div class="trow hl"></div><div class="trow"></div><div class="trow"></div><div class="trow"></div><div class="trow"></div><div class="trow"></div><div class="trow"></div>
        <div class="trow"><i class="tri"></i><svg><use href="#qgis"/></svg>Network analysis</div>
        <div class="trow"><i class="tri"></i><svg><use href="#qgis"/></svg>Raster analysis</div>
        <div class="trow"><i class="tri"></i><svg><use href="#qgis"/></svg>Raster terrain analysis</div>
        <div class="trow"><i class="tri"></i><svg><use href="#qgis"/></svg>Raster tools</div>
        <div class="trow"><i class="tri"></i><svg><use href="#qgis"/></svg>Vector analysis</div>
        <div class="trow"><i class="tri"></i><svg><use href="#qgis"/></svg>Vector creation</div>
        <div class="trow"><i class="tri"></i><svg><use href="#qgis"/></svg>Vector general</div>
        <div class="trow"><i class="tri"></i><svg><use href="#qgis"/></svg>Vector geometry</div>
        <div class="trow"><i class="tri"></i><svg><use href="#qgis"/></svg>Vector overlay</div>
        <div class="trow"><i class="tri"></i><svg><use href="#qgis"/></svg>Vector selection</div>
        <div class="trow"><i class="tri"></i><svg><use href="#qgis"/></svg>Vector table</div>
        <div class="trow"><i class="tri"></i><svg class="big" viewBox="0 0 32 32"><circle cx="19" cy="18" r="11.500" fill="#62bdea"/><path d="M12 8l9-1 1 8-7 8-4-6z" fill="#3fa35b"/><path d="M10 10l12 6-11 3z" fill="none" stroke="#d33" stroke-width="1.200"/><path d="M1 9l6-4 2 3-6 4zM10 4l6-4 1 3-6 4z" fill="#666"/><path d="M7 3l5 4-3 3-4-4z" fill="#333"/><text x="0" y="31.500" class="gdal" textLength="31" lengthAdjust="spacingAndGlyphs">GDAL</text></svg>GDAL</div>
        <div class="trow"><i class="tri"></i><svg class="big" viewBox="0 0 32 32"><path d="M16 1.500L27 15 16 29 5 15z" fill="#fff" stroke="#222" stroke-width="1"/><path d="M16 26L15 7M16 26L10 11M16 26L22 11M16 26L7 16M16 26l9-10" stroke="#38a838" stroke-width="1.700"/><path d="M4 20l12 9 12-9M5 29h8M19 29h9" fill="none" stroke="#111" stroke-width="1.600"/></svg>GRASS</div>
        <div class="trow"><i class="tri"></i><svg class="big" viewBox="0 0 32 32"><path d="M25 4Q13-1 5 8-2 20 7 27q10 6 18-1 4-4 4.500-9H15" fill="none" stroke="#0d5596" stroke-width="3.400"/><path d="M27 1v6h-7q-7 3-13 12l13 0 5 8M14 9l12 12" fill="none" stroke="#0d5596" stroke-width="2.800"/></svg>SAGA</div>
      </div>
    </section>
  </main>
</div>

<div class="dialog">
  <header class="dlg-title"><i class="light red"></i><i class="light"></i><i class="light green"></i><span>Select by Expression - NYC_tract2010_LangJoin</span></header>
  <nav class="tabs"><span class="tab on">Expression</span><span class="tab">Function Editor</span></nav>
  <div class="dlg-body">
    <section class="left-col">
      <div class="ops"><button>=</button><button>+</button><button>-</button><button>/</button><button>*</button><button>^</button><button>||</button><button>(</button><button>)</button><button>'\n'</button></div>
      <div class="editor"><span class="field">"2010LanguagesbyTract2010_P_Russian"</span> <span class="op">&gt;</span><span class="num">0.30</span></div>
      <p class="preview"><span>Output preview:</span><span>0</span></p>
    </section>
    <div class="dlg-split"><i class="dots"></i></div>
    <section class="mid-col">
      <div class="search-line">
        <div class="search"><svg width="26" height="34"><circle cx="10.500" cy="12" r="9" fill="none" stroke="#999" stroke-width="2"/><path d="M16 19l8 9" stroke="#999" stroke-width="3"/></svg><span>Russia</span><svg width="27" height="20"><path d="M0 10L6.500 0H26.500v20H6.500z" fill="#8e8e8e"/><path d="M10.500 4.500l10 11M20.500 4.500l-10 11" stroke="#fff" stroke-width="1.800"/></svg></div>
        <button class="show-help">Show Help</button>
      </div>
      <div class="functions">
        <div class="flist">
          <div class="group"><i class="down"></i><span>Fields and Values</span></div>
          <div class="fn tall"><em>123</em>2010LanguagesbyTract2010_Russian</div>
          <div class="fn tall"><em>1.2</em>2010LanguagesbyTract2010_P_Russian</div>
          <div class="group"><i class="down"></i><span>Map Layers</span></div>
          <div class="fn">Russian</div>
          <div class="fn">Russian</div>
          <div class="group"><i class="down"></i><span>Recent (Selection)</span></div>
          <div class="fn rec sel"><span>"2010LanguagesbyTract2010_P_Russian" ...</span></div>
          <div class="fn rec"><span>"2010LanguagesbyTract2010_P_Russian" ...</span></div>
          <div class="fn rec"><span>"2010LanguagesbyTract2010_P_Russian" ...</span></div>
          <div class="fn rec"><span>"2010LanguagesbyTract2010_P_Russian"</span></div>
        </div>
        <div class="scroll"><span class="sb"><i class="up"></i></span><span class="handle"></span><span class="groove"></span><span class="sb end"><i class="down"></i></span></div>
      </div>
    </section>
    <div class="dlg-split narrow"><i class="dots"></i></div>
    <section class="help">"2010LanguagesbyTract2010_P_Russian" <span class="wide-op">&gt;</span><span class="wide-num">0.30</span></section>
  </div>
  <footer class="dlg-foot">
    <button class="help-btn">Help</button>
    <button class="zoom">Zoom to Features</button>
    <button class="select"><svg width="28" height="42"><rect x="8" y="14" width="18" height="24" fill="#fde74f" stroke="#bfa21a" stroke-width="1.600"/><path d="M14 9Q11 2 5 5C0 9 3 14 10 14 1 14-1 21 3 24c5 3 11 0 12-5" fill="none" stroke="#6a3a72" stroke-width="2.500"/></svg>Select features</button>
    <button class="drop"><i class="down"></i></button>
    <button class="close"><u>C</u>lose</button>
  </footer>
</div>
</body>
</html>
```
FILE: styles.css
```css
* { box-sizing: border-box; }
body { margin: 0; width: 2598px; height: 1224px; overflow: hidden; background: #ebebeb; color: #000; font: 26px/36px Inter, "Liberation Sans", sans-serif; letter-spacing: -0.15px; position: relative; }
h2, p { margin: 0; font-weight: 400; }
i, em { font-style: normal; }
svg { display: block; flex: none; }
.defs { position: absolute; }
button { font: inherit; letter-spacing: inherit; color: #000; padding: 0; margin: 0; border: 2px solid #adadad; border-radius: 5px; background: linear-gradient(#fff, #f0f0f0 80%, #ececec); display: flex; align-items: center; justify-content: center; flex: none; }

.app { width: 2598px; height: 1224px; display: flex; flex-direction: column; }
.titlebar { height: 40px; flex: none; display: flex; padding-left: 14px; border-bottom: 1px solid #aeaeae; background: linear-gradient(#e8e6e8, #d2d0d2); color: #444; }
.light { width: 24px; height: 24px; border-radius: 50%; background: #cfcfcf; border: 1px solid #b3b3b3; flex: none; }
.titlebar .light { margin-top: 6px; }
.light.red { background: #fc605c; border-color: #e0443e; }
.light.green { background: #34c84a; border-color: #1fab35; }
.main-title { margin-left: 1108px; letter-spacing: -0.2px; }
.toolbar { height: 77px; flex: none; border-bottom: 2px solid #b4b4b4; background: linear-gradient(#f7f7f7, #ebebeb); }
.toolbar.second { height: 78px; }

.workspace { height: 1029px; display: flex; }
.strip { width: 20px; flex: none; border-right: 2px solid #b9b9b9; }
.layers { width: 588px; flex: none; padding-left: 2px; display: flex; flex-direction: column; border-right: 1px solid #b9b9b9; }
.dock-title { height: 41px; padding-left: 7px; font-size: 22px; line-height: 41px; letter-spacing: -0.2px; }
.dock-tools { height: 60px; margin-left: -2px; overflow: hidden; }
.tree { flex: 1; border: 1px solid #b9b9b9; border-width: 2px 0 0 1px; background: #fff; overflow: hidden; }
.row { height: 36px; display: flex; align-items: center; white-space: nowrap; }
.row b { letter-spacing: 0.25px; }
.row .ic0 + b { letter-spacing: 0.35px; }
.row.off b { font-style: italic; color: #b9b9b9; }
.gap { width: 47px; padding-left: 13px; flex: none; }
.down, .up { display: block; width: 0; height: 0; border: 8px solid transparent; border-bottom-width: 0; border-top: 9px solid #5c5c5c; }
.up { border-width: 0 8px 9px; border-bottom-color: #5c5c5c; }
.cb { width: 28px; height: 28px; }
.ic0 { width: 44px; padding-left: 2px; }
.ic { width: 56px; flex: none; display: flex; justify-content: center; }
.sub { padding-left: 87px; letter-spacing: -0.4px; }
.sym { width: 100px; display: flex; justify-content: center; flex: none; }
.h44 { height: 44px; } .h48 { height: 48px; } .h80 { height: 80px; }
.blank { width: 32px; height: 32px; border: 1px solid #ddd; background: #fff; }
.current { background: #d2d2d2; }
.row .active { border-bottom: 2px solid #000; line-height: 28px; margin-top: 1px; letter-spacing: 0.15px; }
.swatch { width: 36px; height: 36px; margin: 0 12px 0 12px; flex: none; }
.s0 { border: 1px solid #f3f3f3; border-width: 0 1px; }
.s1 { background: #fab1b7; } .s2 { background: #f866a0; } .s3 { background: #c51b8a; } .s4 { background: #7a0177; }
.splitter { width: 16px; flex: none; display: flex; align-items: center; justify-content: center; border-right: 1px solid #b9b9b9; }
.splitter.right { width: 15px; border-left: 1px solid #b9b9b9; }
.splitter .dots { margin-top: 245px; }
.dots { width: 2px; height: 34px; flex: none; background: repeating-linear-gradient(#b9b9b9 0 2px, #f4f4f4 2px 6px); }

.map { background: #fff; }
.map path { vector-effect: non-scaling-stroke; }
.tract { fill: none; stroke: #dedede; stroke-width: 3; }
.tr { fill: none; stroke: #dcdcdc; stroke-width: 1.2; }
.co { fill: none; stroke: #6e6e6e; stroke-width: 1; }
.co.wide { stroke-width: 1.5; }
.co.thick { stroke-width: 1.6; }
.riv { fill: none; stroke: #707070; stroke-width: 5; }
.riv.in { stroke: #fff; stroke-width: 3; }
.park, .hole { fill: #fff; stroke: #dcdcdc; }
.pink { fill: #fbb1b9; stroke: #d3bfc2; stroke-width: 1; }
.yel { fill: #ff0; stroke: #c8c89a; stroke-width: 1; }
.bubble circle { fill: #3a6fb0; fill-opacity: .68; stroke: #3b6698; stroke-opacity: .8; stroke-width: 2; vector-effect: non-scaling-stroke; }

.toolbox { flex: 1; display: flex; flex-direction: column; }
.toolbox-head { height: 103px; border-bottom: 2px solid #b0b0b0; }
.toolbox-search { height: 48px; flex: none; background: #fff; border-bottom: 3px solid #b0b0b0; }
.toolbox-tree { flex: 1; background: #fff; overflow: hidden; }
.trow { height: 36px; padding-left: 17px; display: flex; align-items: center; }
.trow.hl { background: #d2d2d2; }
.trow svg { width: 29px; height: 28px; margin: 0 13px 0 23px; }
.trow svg.big { width: 32px; height: 32px; margin: 0 12px 0 21px; }
.tri { border: 8px solid transparent; border-width: 8px 0 8px 8px; border-left-color: #5c5c5c; }
.gdal { font: 700 15px "Liberation Sans", sans-serif; letter-spacing: 0; }

/* modal window floating above the main one */
.dialog { position: absolute; left: 324px; top: 26px; width: 2248px; height: 620px; border-radius: 10px; background: #ebebeb; box-shadow: 0 0 1px 1px rgba(0,0,0,.3), 0 36px 92px rgba(0,0,0,.6); display: flex; flex-direction: column; overflow: hidden; }
.dlg-title { height: 44px; flex: none; display: flex; align-items: center; gap: 16px; padding: 0 0 0 16px; border-bottom: 2px solid #b2b0b2; border-top: 1px solid #f7f6f7; background: linear-gradient(#e8e6e8, #d2d0d3); color: #333; }
.dlg-title span { flex: 1; text-align: center; margin-left: -136px; padding-top: 2px; letter-spacing: -0.2px; }
.tabs { height: 61px; flex: none; display: flex; align-items: flex-end; padding: 6px 7px 0 6px; background: linear-gradient(#b9b9b9, #b9b9b9) 7px 57px / 2234px 2px no-repeat, linear-gradient(#fff, #fff) 7px 59px / 2234px 2px no-repeat; }
.tab { height: 49px; width: 233px; margin-bottom: 4px; border: 2px solid #b9b9b9; border-left: 0; border-bottom: 0; border-radius: 0 4px 0 0; background: #e5e5e5; text-align: center; line-height: 52px; }
.tab.on { width: 183px; height: 55px; margin-bottom: 0; border: 2px solid #adadad; border-bottom: 0; border-radius: 5px 5px 0 0; background: #fdfdfd; line-height: 55px; letter-spacing: -0.3px; }
.dlg-body { height: 451px; flex: none; display: flex; padding-left: 24px; }
.left-col { width: 781px; flex: none; padding-top: 37px; }
.ops { display: flex; gap: 4px; }
.ops button { width: 56px; height: 48px; padding-top: 2px; }
.ops button:first-child, .ops button:nth-child(6) { width: 58px; }
.editor, .help { border: 1px solid #b4b4b4; border-top-width: 2px; background: #fff; font: 27px/32px "Noto Sans", "Open Sans", sans-serif; letter-spacing: 0.1px; white-space: pre; }
.editor { height: 289px; margin-top: 12px; padding: 0 0 0 10px; line-height: 30px; }
.field { color: #eab700; } .op { color: #4271ae; } .num { color: #c82829; }
.op, .wide-op { letter-spacing: 3px; margin-left: 2px; }
.num, .wide-num { letter-spacing: 0.9px; }
.preview { display: flex; gap: 17px; padding-top: 12px; }
.dlg-split { width: 45px; display: flex; justify-content: center; flex: none; padding: 210px 0 0 3px; }
.dlg-split.narrow { width: 26px; padding-left: 0; padding-right: 13px; }
.mid-col { width: 660px; flex: none; padding-top: 19px; display: flex; flex-direction: column; gap: 12px; }
.search-line { display: flex; gap: 12px; }
.search { width: 488px; height: 48px; display: flex; align-items: center; gap: 14px; padding: 0 15px 0 15px; border: 2px solid #adadad; border-radius: 5px; background: #fff; }
.search span { flex: 1; }
.show-help { width: 160px; height: 48px; padding-top: 1px; border-color: #579be6; background: linear-gradient(#fff, #eef1f6 60%, #dfe5ee); }
.functions { height: 351px; display: flex; border: 1px solid #b4b4b4; border-top-width: 2px; background: #fff; overflow: hidden; }
.flist { width: 629px; flex: none; }
.group { height: 32px; display: flex; align-items: center; line-height: 32px; padding-left: 13px; }
.group span { flex: 1; margin-left: 12px; padding-left: 5px; background: #eeeeee; }
.fn { height: 32px; line-height: 32px; padding-left: 86px; white-space: pre; }
.tall { height: 36px; line-height: 36px; display: flex; padding-left: 87px; letter-spacing: -0.08px; }
.tall em { width: 44px; font: 700 19px/35px "Noto Sans", sans-serif; letter-spacing: -.3px; color: #666; }
.rec { padding-left: 81px; }
.rec span { display: block; padding-left: 13px; letter-spacing: -0.22px; }
.sel { background: #0069d9; color: #fff; }
.sel span { background: linear-gradient(#1d7ae2, #0a6cdc); border-radius: 3px 0 0 3px; }
.scroll { flex: 1; display: flex; flex-direction: column; border-left: 1px solid #c4c4c4; background: linear-gradient(90deg, #f2f2f2, #fafafa); }
.sb { height: 27px; display: flex; align-items: center; justify-content: center; border-bottom: 2px solid #b9b9b9; background: #fafafa; }
.sb.end { flex: 1; border: 0; }
.handle { height: 226px; border-bottom: 2px solid #b9b9b9; }
.groove { height: 68px; background: #e2e2e2; border-bottom: 2px solid #b9b9b9; }
.help { width: 669px; height: 375px; margin-top: 37px; padding: 8px 9px; flex: none; }
.dlg-foot { flex: 1; display: flex; align-items: flex-start; padding: 10px 6px 0; }
.help-btn { width: 160px; height: 48px; padding-top: 2px; margin-right: auto; }
.zoom { width: 195px; height: 38px; margin: 4px 12px 0 0; padding-top: 1px; font-size: 20px; letter-spacing: 0.1px; }
.select { width: 213px; height: 46px; font-size: 20px; letter-spacing: 0; padding: 1px 5px 0 0; gap: 9px; }
.drop { width: 24px; height: 46px; margin: 0 24px 0 1px; }
.close { width: 160px; height: 48px; padding-top: 2px; }
.close u { text-underline-offset: 5px; text-decoration-thickness: 2px; }
```
